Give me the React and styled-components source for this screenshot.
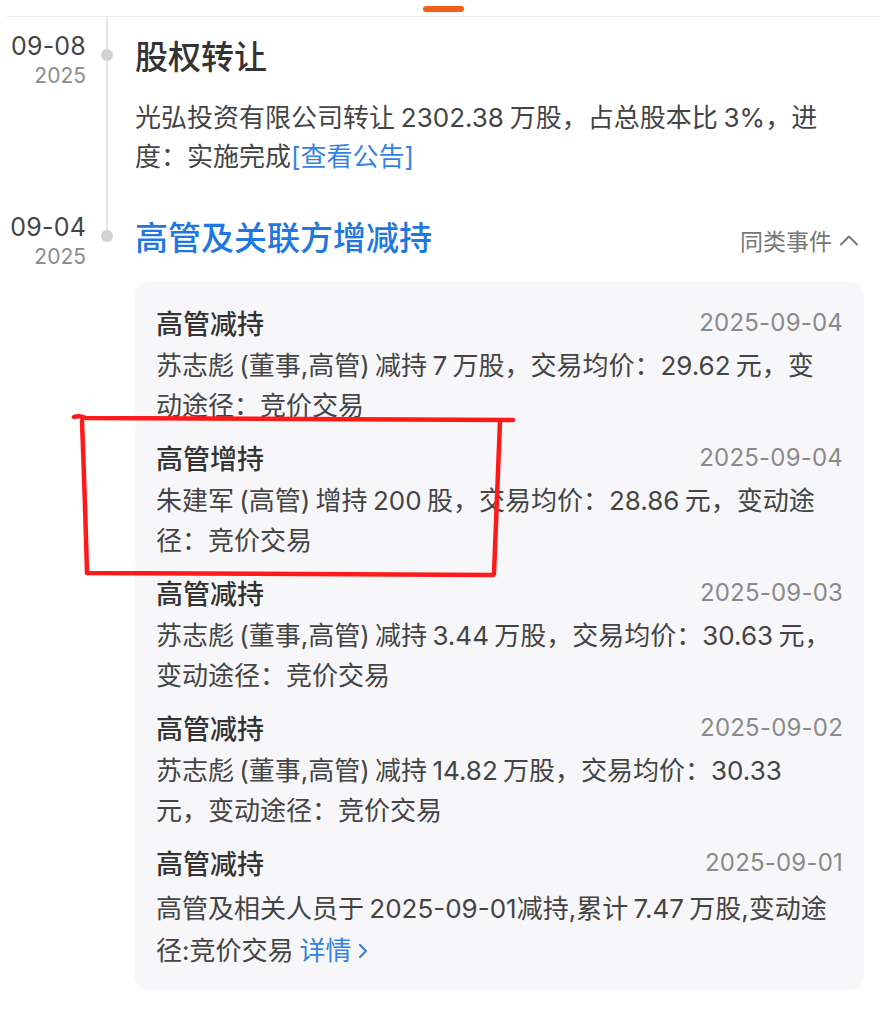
import React from "react";
import styled, { createGlobalStyle } from "styled-components";

const GlobalStyle = createGlobalStyle`
  html, body {
    margin: 0;
    padding: 0;
    background: #fff;
  }
  body {
    font-family: "Inter", "Noto Sans CJK SC", sans-serif;
    -webkit-font-smoothing: antialiased;
  }
`;

const Page = styled.div`
  position: relative;
  width: 886px;
  min-height: 1024px;
  background: #fff;
  color: #333;
  overflow: hidden;
`;

const TabStrip = styled.div`
  box-sizing: border-box;
  height: 17px;
  margin: 0 7px;
  padding-top: 6px;
  display: flex;
  justify-content: center;
  align-items: flex-start;
  border-bottom: 1px solid #ececec;
`;

const TabIndicator = styled.span`
  width: 41px;
  height: 6px;
  border-radius: 3px;
  background: #f0601a;
`;

const Timeline = styled.div`
  display: flex;
  flex-direction: column;
`;

const Event = styled.div`
  display: grid;
  grid-template-columns: 86px 42px 1fr;
  padding: 18px 22px ${(p) => (p.$last ? "0" : "22px")} 0;
`;

const DateCol = styled.div`
  margin-top: -4px;
  text-align: right;
`;

const MonthDay = styled.div`
  font-size: 25px;
  line-height: 30px;
  color: #444;
  letter-spacing: 0.2px;
`;

const Year = styled.div`
  font-size: 21px;
  line-height: 29px;
  color: #8c8c8c;
`;

const Rail = styled.div`
  position: relative;
  &::before {
    content: "";
    position: absolute;
    left: 20px;
    width: 2px;
    top: -18px;
    background: #e6e6e6;
    ${(p) => (p.$last ? "height: 38px;" : "bottom: -22px;")}
  }
`;

const Dot = styled.span`
  position: absolute;
  left: 15px;
  top: 14px;
  width: 12px;
  height: 12px;
  border-radius: 50%;
  background: #d2d2d2;
`;

const Content = styled.div`
  padding-left: 7px;
  min-width: 0;
`;

const TitleRow = styled.div`
  display: flex;
  justify-content: space-between;
  align-items: center;
`;

const Title = styled.div`
  font-size: 33px;
  line-height: 44px;
  font-weight: 500;
  color: ${(p) => (p.$accent ? "#1f78e0" : "#333")};
`;

const SimilarToggle = styled.div`
  display: flex;
  align-items: center;
  gap: 7px;
  padding-right: 5px;
  margin-top: 4px;
  font-size: 23px;
  color: #777;
`;

const Desc = styled.div`
  margin-top: 19px;
  font-size: 26px;
  line-height: 39px;
  color: #444;
  word-spacing: -1.5px;
`;

const Link = styled.span`
  color: #3583e0;
`;

const Card = styled.div`
  margin-top: 22px;
  padding: 20px 21px 18px;
  border-radius: 14px;
  background: #f7f7f9;
`;

const Item = styled.div`
  padding-bottom: ${(p) => (p.$last ? "0" : "11px")};
`;

const ItemHead = styled.div`
  display: flex;
  justify-content: space-between;
  align-items: center;
  height: 40px;
`;

const ItemTitle = styled.div`
  font-size: 27px;
  font-weight: 500;
  color: #333;
`;

const ItemDate = styled.div`
  font-size: 24px;
  color: #8a8a8a;
  letter-spacing: 0.2px;
`;

const ItemBody = styled.div`
  margin-top: ${(p) => (p.$loose ? "6px" : "4px")};
  font-size: 26px;
  line-height: ${(p) => (p.$loose ? "42px" : "40px")};
  color: #444;
  word-spacing: -2px;
`;

const More = styled.span`
  display: inline-flex;
  align-items: center;
  gap: 6px;
  margin-left: 6px;
  color: #3583e0;
`;

const Annotation = styled.svg`
  position: absolute;
  left: 0;
  top: 0;
  pointer-events: none;
`;

const ChevronUp = () => (
  <svg width="20" height="12" viewBox="0 0 20 12">
    <polyline points="2,10.5 10,2.5 18,10.5" fill="none" stroke="#777" strokeWidth="2" strokeLinecap="round" strokeLinejoin="round" />
  </svg>
);

const ChevronRight = () => (
  <svg width="10" height="16" viewBox="0 0 10 16">
    <polyline points="2,2 8,8 2,14" fill="none" stroke="#3583e0" strokeWidth="2.2" strokeLinecap="round" strokeLinejoin="round" />
  </svg>
);

const trades = [
  {
    title: "高管减持",
    date: "2025-09-04",
    lines: ["苏志彪 (董事,高管) 减持 7 万股，交易均价：29.62 元，变", "动途径：竞价交易"],
  },
  {
    title: "高管增持",
    date: "2025-09-04",
    lines: ["朱建军 (高管) 增持 200 股，交易均价：28.86 元，变动途", "径：竞价交易"],
  },
  {
    title: "高管减持",
    date: "2025-09-03",
    lines: ["苏志彪 (董事,高管) 减持 3.44 万股，交易均价：30.63 元，", "变动途径：竞价交易"],
  },
  {
    title: "高管减持",
    date: "2025-09-02",
    lines: ["苏志彪 (董事,高管) 减持 14.82 万股，交易均价：30.33", "元，变动途径：竞价交易"],
  },
  {
    title: "高管减持",
    date: "2025-09-01",
    lines: ["高管及相关人员于 2025-09-01减持,累计 7.47 万股,变动途", "径:竞价交易"],
    more: true,
  },
];

const TradeItem = ({ trade, last }) => (
  <Item $last={last}>
    <ItemHead>
      <ItemTitle>{trade.title}</ItemTitle>
      <ItemDate>{trade.date}</ItemDate>
    </ItemHead>
    <ItemBody $loose={trade.more}>
      {trade.lines[0]}
      <br />
      {trade.lines[1]}
      {trade.more && (
        <More>
          详情
          <ChevronRight />
        </More>
      )}
    </ItemBody>
  </Item>
);

export default function App() {
  return (
    <Page>
      <GlobalStyle />
      <TabStrip>
        <TabIndicator />
      </TabStrip>
      <Timeline>
        <Event>
          <DateCol>
            <MonthDay>09-08</MonthDay>
            <Year>2025</Year>
          </DateCol>
          <Rail>
            <Dot />
          </Rail>
          <Content>
            <Title>股权转让</Title>
            <Desc>
              光弘投资有限公司转让 2302.38 万股，占总股本比 3%，进
              <br />
              度：实施完成<Link>[查看公告]</Link>
            </Desc>
          </Content>
        </Event>
        <Event $last>
          <DateCol>
            <MonthDay>09-04</MonthDay>
            <Year>2025</Year>
          </DateCol>
          <Rail $last>
            <Dot />
          </Rail>
          <Content>
            <TitleRow>
              <Title $accent>高管及关联方增减持</Title>
              <SimilarToggle>
                同类事件
                <ChevronUp />
              </SimilarToggle>
            </TitleRow>
            <Card>
              {trades.map((t, i) => (
                <TradeItem key={i} trade={t} last={i === trades.length - 1} />
              ))}
            </Card>
          </Content>
        </Event>
      </Timeline>
      <Annotation width="886" height="1024" viewBox="0 0 886 1024">
        <path
          d="M74 417 Q79 415 86 418 L300 419 L513 420 M82 421 Q85 500 87 573 L300 574 L493 575 M500 421 Q497 500 494 574"
          fill="none"
          stroke="#ff1a1a"
          strokeWidth="4.5"
          strokeLinecap="round"
          strokeLinejoin="round"
        />
      </Annotation>
    </Page>
  );
}
